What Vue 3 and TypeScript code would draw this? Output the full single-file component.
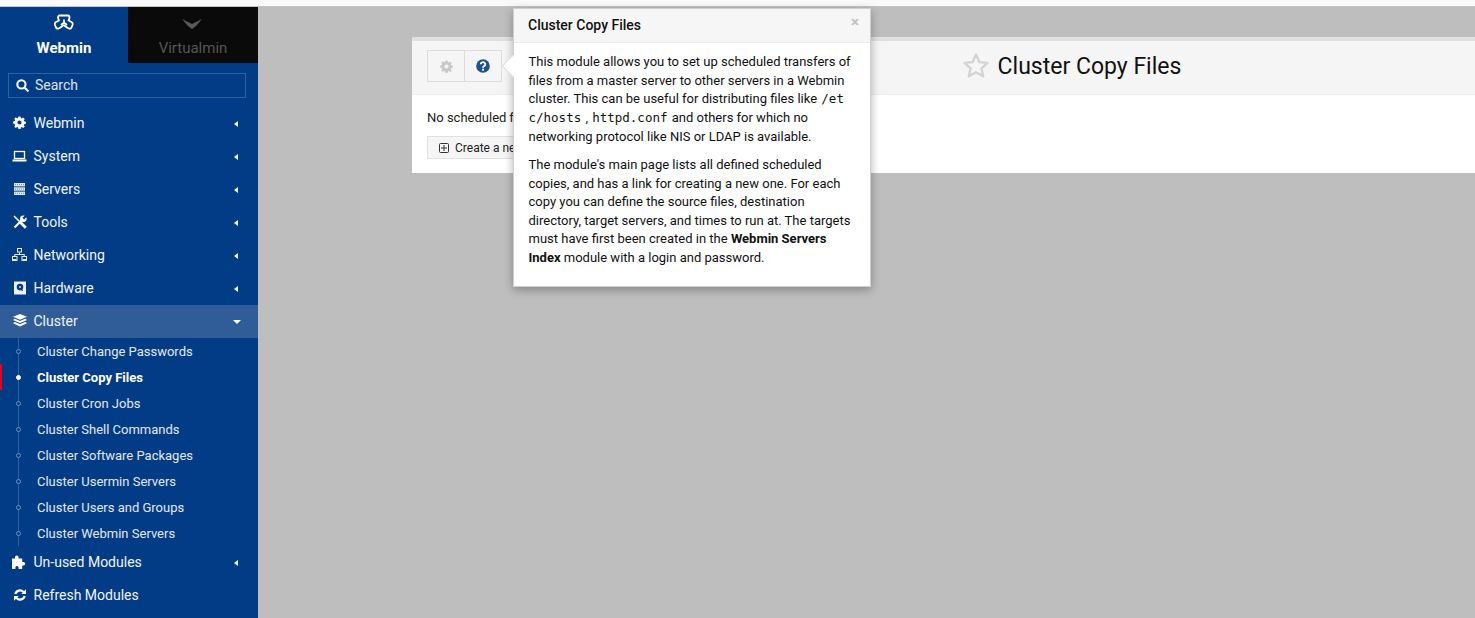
<script setup lang="ts">
const menu1 = [
  { label: 'Webmin', icon: 'gear' },
  { label: 'System', icon: 'laptop' },
  { label: 'Servers', icon: 'server' },
  { label: 'Tools', icon: 'tools' },
  { label: 'Networking', icon: 'net' },
  { label: 'Hardware', icon: 'hdd' },
]
const subs = [
  'Cluster Change Passwords',
  'Cluster Copy Files',
  'Cluster Cron Jobs',
  'Cluster Shell Commands',
  'Cluster Software Packages',
  'Cluster Usermin Servers',
  'Cluster Users and Groups',
  'Cluster Webmin Servers',
]
const gear = 'M7 4.6a2.4 2.4 0 1 0 0 4.8 2.4 2.4 0 0 0 0-4.8zM5.8 0h2.4l.4 1.8 1.1.5 1.6-1 1.7 1.7-1 1.6.5 1.1 1.8.4v2.4l-1.8.4-.5 1.1 1 1.6-1.7 1.7-1.6-1-1.1.5-.4 1.8H5.8l-.4-1.8-1.1-.5-1.6 1-1.7-1.7 1-1.6-.5-1.1L-.3 8.2V5.8l1.8-.4.5-1.1-1-1.6 1.7-1.7 1.6 1 1.1-.5z'
</script>

<template>
  <div class="page">
    <div class="topstrip"></div>
    <div class="shell">
      <aside class="side">
        <div class="tabs">
          <div class="tab on">
            <svg class="tabicon" width="20" height="18" viewBox="0 0 20 18" fill="none" stroke="#fff" stroke-width="1.800" stroke-linejoin="round">
              <path d="M6 1.500h8c1 0 1.500 1 1.500 2s-.5 2-1 3l3 1.500c1 .5 1.500 1.500 1 3l-1 2.500c-.5 1-1.500 1.500-2.500 1-1.500-.5-3-1.500-4.500-3-.6-.5-1-.5-1.500 0-1.500 1.500-3 2.500-4.500 3-1 .5-2 0-2.500-1l-1-2.500c-.5-1.500 0-2.500 1-3l3-1.500c-.5-1-1-2-1-3s.5-2 1.500-2z" />
              <path d="M10 5.500v3M7 11l3-2.500 3 2.500" />
            </svg>
            <span>Webmin</span>
          </div>
          <div class="tab off">
            <svg class="tabicon chev" width="20" height="18" viewBox="0 0 20 18">
              <path d="M0 5l10 5 10-5-6 7-4 3-4-3z" fill="#5a5a5a" />
            </svg>
            <span>Virtualmin</span>
          </div>
        </div>
        <div class="search">
          <svg width="13" height="13" viewBox="0 0 12 12" fill="none" stroke="#fff" stroke-width="1.900">
            <circle cx="5" cy="5" r="3.800" /><path d="M8 8l3.500 3.500" />
          </svg>
          <span>Search</span>
        </div>
        <nav class="nav">
          <div v-for="m in menu1" :key="m.label" class="item">
            <span class="ico">
              <svg v-if="m.icon === 'gear'" width="13" height="13" viewBox="-.5 -.5 15 15" fill="#fff" fill-rule="evenodd"><path :d="gear" /></svg>
              <svg v-else-if="m.icon === 'laptop'" width="15" height="12" viewBox="0 0 15 12" fill="none" stroke="#fff"><rect x="2.500" y="1.500" width="10" height="7" stroke-width="1.300" /><path d="M.5 10.500h14" stroke-width="2" /></svg>
              <svg v-else-if="m.icon === 'server'" width="11" height="12" viewBox="0 0 11 12"><rect width="11" height="3.400" fill="#dfe6f0" /><rect y="4.300" width="11" height="3.400" fill="#dfe6f0" /><rect y="8.600" width="11" height="3.400" fill="#dfe6f0" /><path d="M1 1.700h9M1 6h9M1 10.300h9" stroke="#5f86b8" stroke-dasharray="1 1" /></svg>
              <svg v-else-if="m.icon === 'tools'" width="14" height="14" viewBox="0 0 14 14" fill="none" stroke="#fff"><path d="M1 1 7 7" stroke-width="1.600" /><path d="M7 7 12.800 12.800" stroke-width="2.800" /><path d="M1.500 12.500 8.500 5.500" stroke-width="2.200" /><circle cx="10.300" cy="3.700" r="3.300" fill="#fff" stroke="none" /><path d="M10.300 3.700 14 0" stroke="#033c86" stroke-width="2.400" /></svg>
              <svg v-else-if="m.icon === 'net'" width="15" height="13" viewBox="0 0 15 13" fill="#e6ebf3" fill-rule="evenodd"><path d="M5 0h5v4.500H5zM6 1v2.500h3V1zM0 8h5.500v5H0zM1 9v3h3.500V9zM9.500 8H15v5H9.500zM10.500 9v3H14V9z" /><path d="M7 4.500h1v1.500h4.700v2h-1V7H3.300v1h-1V6H7z" /><rect x="1" y="11" width="3.500" height="1" /><rect x="10.500" y="11" width="3.500" height="1" /></svg>
              <svg v-else width="12" height="14" viewBox="0 0 12 14" fill-rule="evenodd"><path fill="#eef2f7" d="M0 .5h12v13H0zM6 2.800a3.300 3.300 0 1 0 0 6.600 3.300 3.300 0 0 0 0-6.600z" /><circle cx="6" cy="6" r="1" fill="#cfdbea" /><path d="M6.500 7l2 3" stroke="#033c86" stroke-width="1.200" /></svg>
            </span>
            <span class="lbl">{{ m.label }}</span>
            <i class="caret"></i>
          </div>
          <div class="item open">
            <span class="ico">
              <svg width="14" height="13" viewBox="0 0 14 13" fill="#fff"><path d="M7 0l7 2.800-7 3-7-3z" /><path d="M1.800 4.700 7 7l5.200-2.300L14 6 7 9 0 6z" /><path d="M1.800 8 7 10.200 12.200 8 14 9.300 7 12.500 0 9.300z" /></svg>
            </span>
            <span class="lbl">Cluster</span>
            <i class="caret down"></i>
          </div>
          <div class="subs">
            <div v-for="s in subs" :key="s" class="sub" :class="{ cur: s === 'Cluster Copy Files' }">
              <i class="dot"></i>{{ s }}
            </div>
          </div>
          <div class="item">
            <span class="ico">
              <svg width="15" height="14" viewBox="0 0 15 14" fill="#fff"><path d="M0 3.500h3V2.200a1.800 1.800 0 1 1 3.600 0v1.300h3.600V7h1.200a1.800 1.800 0 1 1 0 3.600h-1.200V14H6.600v-1.500a1.600 1.600 0 1 0-3.200 0V14H0z" /></svg>
            </span>
            <span class="lbl">Un-used Modules</span>
            <i class="caret"></i>
          </div>
          <div class="item">
            <span class="ico">
              <svg width="12" height="12" viewBox="0 0 12 12" fill="none" stroke="#fff" stroke-width="2.200"><path d="M1.300 5A4.800 4.800 0 0 1 9.500 3" /><path d="M10.700 7A4.800 4.800 0 0 1 2.500 9" /><path d="M12 .3V5H7.300z" fill="#fff" stroke="none" /><path d="M0 11.700V7h4.700z" fill="#fff" stroke="none" /></svg>
            </span>
            <span class="lbl">Refresh Modules</span>
          </div>
        </nav>
      </aside>
      <main class="main">
        <section class="panel">
          <header class="head">
            <div class="btns">
              <div class="hbtn first">
                <svg width="13" height="13" viewBox="-.5 -.5 15 15" fill="#c9c9c9" fill-rule="evenodd"><path :d="gear" /></svg>
              </div>
              <div class="hbtn">
                <svg width="14" height="14" viewBox="0 0 14 14"><circle cx="7" cy="7" r="6.800" fill="#1d5190" /><path d="M4.700 5.300a2.300 2.100 0 1 1 3.500 1.800c-.8.500-1.200.8-1.200 1.600" fill="none" stroke="#fff" stroke-width="1.800" /><rect x="6" y="9.700" width="2" height="2" fill="#fff" /></svg>
              </div>
            </div>
            <div class="title">
              <svg class="star" width="26" height="25" viewBox="1 1 24 23.500" fill="none" stroke="#d3d3d3" stroke-width="2.200" stroke-linejoin="round"><path d="M13 2.500l3.200 7 7.600.8-5.700 5.100 1.600 7.500L13 19l-6.700 3.900 1.600-7.500-5.700-5.100 7.600-.8z" /></svg>
              <h1>Cluster Copy Files</h1>
            </div>
          </header>
          <div class="body">
            <p class="none">No scheduled file copies have been defined yet.</p>
            <div class="create">
              <svg width="10" height="10" viewBox="0 0 10 10" fill="none" stroke="#333"><rect x=".5" y=".5" width="9" height="9" rx="1" /><path d="M2 5h6M5 2v6" /></svg>
              <span>Create a new scheduled copy.</span>
            </div>
          </div>
        </section>
      </main>
    </div>
    <div class="pop">
      <i class="arrow"></i>
      <div class="pop-title">
        <span>Cluster Copy Files</span>
        <b class="x">×</b>
      </div>
      <div class="pop-body">
        <p>This module allows you to set up scheduled transfers of files from a master server to other servers in a Webmin cluster. This can be useful for distributing files like <code>/etc/hosts</code> , <code>httpd.conf</code> and others for which no networking protocol like NIS or LDAP is available.</p>
        <p>The module's main page lists all defined scheduled copies, and has a link for creating a new one. For each copy you can define the source files, destination directory, target servers, and times to run at. The targets must have first been created in the <b>Webmin Servers Index</b> module with a login and password.</p>
      </div>
    </div>
  </div>
</template>

<style>
html, body { margin: 0; overflow: hidden; }
</style>

<style scoped>
.page { position: relative; width: 1475px; height: 618px; overflow: hidden; font-family: Roboto, "Liberation Sans", sans-serif; background: #bebebe; display: flex; flex-direction: column; }
.topstrip { height: 6px; background: #f9f9fb; border-bottom: 1px solid #c4c4c4; flex: none; }
.shell { flex: 1; display: flex; min-height: 0; }
.side { width: 258px; flex: none; background: #033c86; color: #f1f4f9; display: flex; flex-direction: column; }
.tabs { display: flex; height: 56px; }
.tab { display: flex; flex-direction: column; align-items: center; font-size: 14px; padding-top: 7px; box-sizing: border-box; }
.tab .tabicon { display: block; margin-bottom: 8px; }
.tab .chev { margin-right: 2px; }
.tab span { line-height: 17px; }
.tab.on { width: 128px; color: #fff; font-weight: 700; font-size: 15px; }
.tab.off { width: 130px; background: #0a0a0a; color: #555; font-size: 15px; font-weight: 400; }
.search { margin: 10px 12px 0 8px; height: 23px; border: 1px solid #30619f; display: flex; align-items: center; gap: 6px; padding-left: 7px; font-size: 14px; color: #dce4ef; }
.search span { padding-bottom: 1px; }
.nav { margin-top: 9px; display: flex; flex-direction: column; }
.item { height: 33px; box-sizing: border-box; padding-bottom: 2px; display: flex; align-items: center; position: relative; font-size: 14px; color: #f1f4f9; flex: none; }
.item.open { background: #305d97; }
.ico { width: 15px; margin-left: 12px; margin-right: 6px; display: flex; justify-content: center; align-items: center; }
.lbl { padding-left: .5px; }
.caret { position: absolute; left: 234px; top: 14px; width: 0; height: 0; border-style: solid; border-width: 3.500px 4px 3.500px 0; border-color: transparent #fff transparent transparent; }
.caret.down { left: 233px; top: 15px; border-width: 4px 4px 0 4px; border-color: #fff transparent transparent transparent; }
.subs { position: relative; flex: none; }
.subs::before { content: ""; position: absolute; left: 18px; top: 0; bottom: 0; width: 1px; background: #30619f; }
.sub { height: 26px; line-height: 28px; padding-left: 37px; font-size: 13px; color: #e2e8f2; position: relative; }
.dot { position: absolute; left: 16px; top: 10.500px; width: 5px; height: 5px; border-radius: 50%; border: 1px solid #6d90bc; box-sizing: border-box; background: #033c86; }
.sub.cur { color: #fff; font-weight: 700; }
.sub.cur::before { content: ""; position: absolute; left: 0; top: 0; width: 2px; height: 26px; background: #e6001f; }
.sub.cur .dot { background: #fff; border-color: #fff; }
.main { flex: 1; padding: 30px 0 0 154px; min-width: 0; }
.panel { background: #fff; border-top: 4px solid #e0e0e0; height: 132px; }
.head { background: #f5f5f5; border-bottom: 1px solid #eee; position: relative; display: flex; align-items: center; justify-content: center; padding-bottom: 1px; height: 52px; }
.btns { position: absolute; left: 15px; top: 9px; display: flex; height: 30px; border: 1px solid #dcdcdc; background: #f5f5f5; }
.hbtn { width: 37px; box-sizing: border-box; padding-right: 1px; display: flex; align-items: center; justify-content: center; }
.hbtn.first { width: 36px; padding-right: 0; }
.hbtn + .hbtn { border-left: 1px solid #dcdcdc; }
.title { display: flex; align-items: center; gap: 9px; margin-left: 257px; }
.star { align-self: flex-start; margin-top: 1px; }
.title h1 { margin: 0; font-size: 23px; font-weight: 400; color: #111; line-height: 30px; }
.body { padding: 14px 15px; font-size: 13px; color: #222; }
.none { margin: 0; line-height: 18px; }
.create { margin-top: 9px; width: 240px; height: 23px; border: 1px solid #e1e1e1; background: #f5f5f5; font-size: 12px; display: flex; align-items: center; gap: 6px; padding-left: 11px; box-sizing: border-box; }
.pop { position: absolute; left: 513px; top: 8px; width: 358px; height: 279px; background: #fff; box-shadow: 0 3px 9px rgba(0,0,0,.3); box-sizing: border-box; border: 1px solid #d0d0d0; }
.arrow { position: absolute; left: -9px; top: 49px; width: 16px; height: 16px; background: #fff; transform: rotate(45deg); border-left: 1px solid #ddd; border-bottom: 1px solid #ddd; box-sizing: border-box; }
.pop-title { position: relative; height: 34px; box-sizing: border-box; background: #f6f6f6; border-bottom: 1px solid #ebebeb; padding: 0 0 2px 14px; display: flex; align-items: center; font-size: 14px; font-weight: 500; color: #111; }
.x { position: absolute; right: 11px; top: 4px; font-size: 15px; color: #bfbfbf; }
.pop-body { padding: 10.300px 14.500px 0; font-size: 13px; line-height: 18.570px; color: #111; position: relative; }
.pop-body p { margin: 0 0 10px; }
code { font-family: "DejaVu Sans Mono", "Liberation Mono", monospace; font-size: 12.500px; word-break: break-all; padding: 0 1px; }
</style>
